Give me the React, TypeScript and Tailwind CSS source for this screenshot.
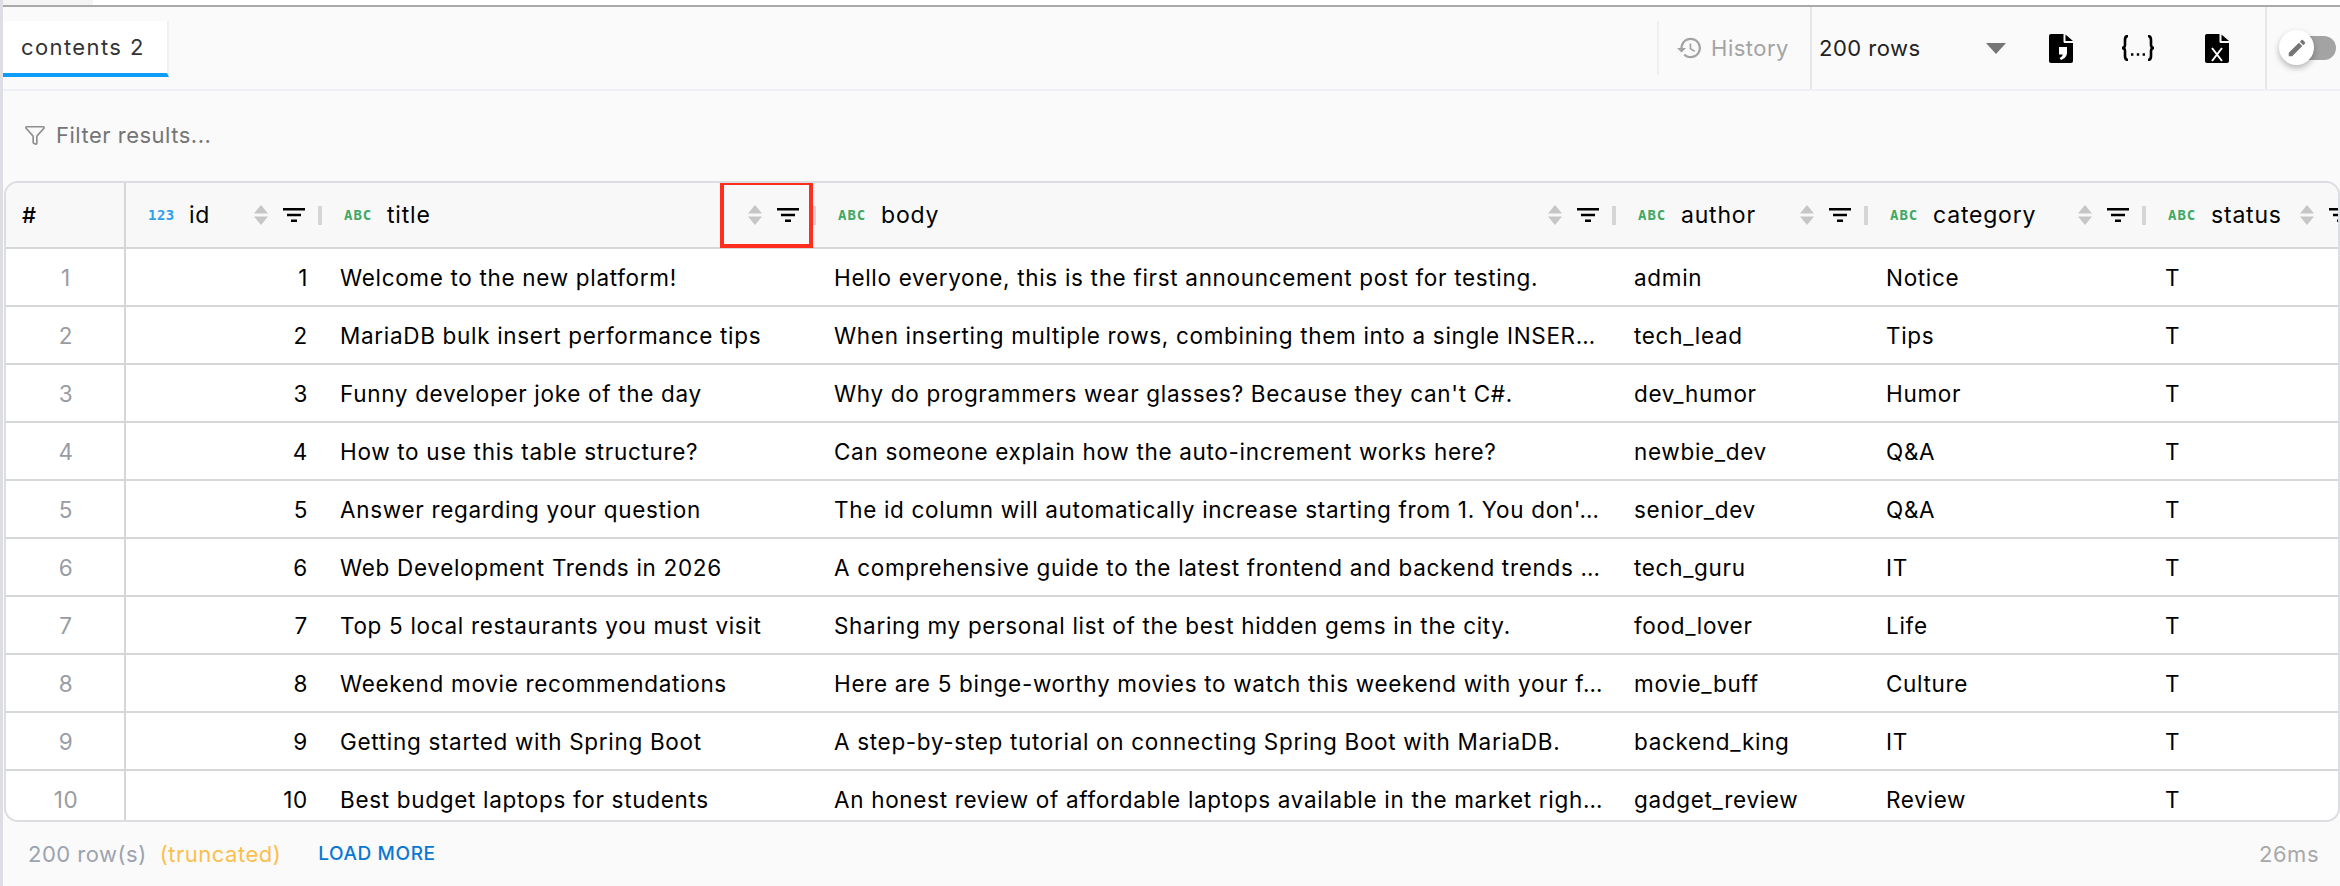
import { Funnel } from "lucide-react";

const rows = [
  ["Welcome to the new platform!", "Hello everyone, this is the first announcement post for testing.", "admin", "Notice"],
  ["MariaDB bulk insert performance tips", "When inserting multiple rows, combining them into a single INSER…", "tech_lead", "Tips"],
  ["Funny developer joke of the day", "Why do programmers wear glasses? Because they can't C#.", "dev_humor", "Humor"],
  ["How to use this table structure?", "Can someone explain how the auto-increment works here?", "newbie_dev", "Q&A"],
  ["Answer regarding your question", "The id column will automatically increase starting from 1. You don'…", "senior_dev", "Q&A"],
  ["Web Development Trends in 2026", "A comprehensive guide to the latest frontend and backend trends …", "tech_guru", "IT"],
  ["Top 5 local restaurants you must visit", "Sharing my personal list of the best hidden gems in the city.", "food_lover", "Life"],
  ["Weekend movie recommendations", "Here are 5 binge-worthy movies to watch this weekend with your f…", "movie_buff", "Culture"],
  ["Getting started with Spring Boot", "A step-by-step tutorial on connecting Spring Boot with MariaDB.", "backend_king", "IT"],
  ["Best budget laptops for students", "An honest review of affordable laptops available in the market righ…", "gadget_review", "Review"],
];

function SortIcon() {
  return (
    <svg width="14" height="20" viewBox="0 0 14 20" className="shrink-0 fill-[#c6c6c6]">
      <path d="M7 0l7 8.500H0zM7 20L0 11.500h14z" />
    </svg>
  );
}

function FilterIcon() {
  return (
    <svg width="22" height="14" viewBox="0 0 22 14" className="shrink-0 fill-black">
      <path d="M0 0h22v2.500H0zM4 5.700h14v2.500H4zM8 11.400h6V14H8z" />
    </svg>
  );
}

function ColHeader({ name, kind, width }: { name: string; kind: "abc" | "num"; width: string }) {
  return (
    <div className={`${width} flex items-center shrink-0 h-full`}>
      {kind === "num" ? (
        <span className="ml-[22px] w-[41px] font-['DejaVu_Sans_Mono'] font-bold text-[14px] text-[#2f9ff0]">123</span>
      ) : (
        <span className="ml-[22px] w-[43px] font-['DejaVu_Sans_Mono'] font-bold text-[14px] text-[#3fa865] tracking-[1px]">ABC</span>
      )}
      <span className="text-[23px] tracking-[0.800px] text-black">{name}</span>
      <div className="ml-auto flex items-center">
        <SortIcon />
        <div className="ml-[15px]">
          <FilterIcon />
        </div>
        <div className="ml-[13px] w-[4px] h-[19px] bg-[#d6d6d6]" />
      </div>
    </div>
  );
}

function FileIcon({ mark }: { mark: "comma" | "x" }) {
  return (
    <svg width="24" height="29" viewBox="0 0 24 29" className="shrink-0">
      <path d="M2 0h12.500v7.500c0 1 .5 1.500 1.500 1.500h8v18c0 1.200-.8 2-2 2H2c-1.200 0-2-.8-2-2V2C0 .8.800 0 2 0zM16.500.5L24 7h-7.500z" fill="#000" />
      {mark === "comma" ? (
        <path d="M10 13h8v5.500c0 3-1.500 6-6 7.500l-1.500-2c2-.8 3-2 3.200-3.500H10z" fill="#fff" />
      ) : (
        <path d="M7 14l10 13M17 14L7 27" stroke="#fff" strokeWidth="2" fill="none" />
      )}
    </svg>
  );
}

function JsonIcon() {
  return (
    <svg width="34" height="26" viewBox="0 0 34 26" className="shrink-0 fill-none stroke-black" strokeWidth="2.600">
      <path d="M7 1C4 1 4 3 4 5v5c0 2-1 3-3 3 2 0 3 1 3 3v5c0 2 0 4 3 4" />
      <path d="M27 1c3 0 3 2 3 4v5c0 2 1 3 3 3-2 0-3 1-3 3v5c0 2 0 4-3 4" />
      <path d="M10 19.500h2.400M15.800 19.500h2.400M21.600 19.500H24" strokeWidth="2.400" />
    </svg>
  );
}

export default function App() {
  return (
    <div className="w-[2340px] h-[886px] overflow-hidden bg-[#fafafa] flex flex-col font-['Inter',sans-serif] text-[22px] tracking-[0.500px] relative border-l-[3px] border-[#dcdee4]">
      <div className="h-[5px] bg-white shrink-0">
        <div className="w-[90px] h-full bg-[#f4f4f4]" />
      </div>
      <div className="h-[2px] bg-[#a9a9a9] shrink-0" />

      {/* toolbar */}
      <div className="h-[84px] shrink-0 border-b-2 border-[#eef0f6] flex">
        <div className="mt-[14px] h-[56px] w-[166px] bg-white border-r-2 border-[#eef0f6] border-b-4 border-b-[#0d9cf7] pl-[18px] flex items-center text-[#333] tracking-[1.400px]">
          contents 2
        </div>
        <div className="ml-auto flex h-full">
          <div className="my-[14px] border-l-2 border-[#eceef2] pl-[18px] pr-[21px] flex items-center gap-[10px] text-[#a3a3a3]">
            <svg width="24" height="24" viewBox="1 3 21 18" className="fill-[#a3a3a3]">
              <path d="M13 3c-4.970 0-9 4.030-9 9H1l3.890 3.890.07.14L9 12H6c0-3.870 3.130-7 7-7s7 3.130 7 7-3.130 7-7 7c-1.930 0-3.680-.79-4.940-2.060l-1.420 1.420C8.270 19.990 10.510 21 13 21c4.970 0 9-4.030 9-9s-4.030-9-9-9zm-1 5v5l4.280 2.540.72-1.210-3.500-2.080V8H12z" />
            </svg>
            History
          </div>
          <div className="w-[457px] border-x-2 border-[#e6e7ea] pl-[7px] flex items-center text-[#222]">
            <span className="w-[167px]">200 rows</span>
            <div className="w-0 h-0 border-x-[10px] border-x-transparent border-t-[11px] border-t-[#757575]" />
            <div className="ml-[43px]">
              <FileIcon mark="comma" />
            </div>
            <div className="ml-[48px]">
              <JsonIcon />
            </div>
            <div className="ml-[50px]">
              <FileIcon mark="x" />
            </div>
          </div>
          <div className="w-[73px] flex items-center relative">
            <div className="ml-[29px] w-[40px] h-[24px] rounded-r-full bg-[#a3a3a3]" />
            <div className="absolute left-[12px] top-[23px] w-[35px] h-[35px] rounded-full bg-white shadow-[0_3px_6px_rgba(0,0,0,0.28)] flex items-center justify-center">
              <svg width="22" height="22" viewBox="0 0 24 24" className="fill-[#757575]">
                <path d="M3 17.250V21h3.750L17.810 9.940l-3.750-3.750L3 17.250zM20.710 7.040c.39-.39.39-1.020 0-1.410l-2.340-2.340c-.39-.39-1.020-.39-1.410 0l-1.830 1.830 3.750 3.750 1.830-1.830z" />
              </svg>
            </div>
          </div>
        </div>
      </div>

      {/* filter */}
      <div className="h-[90px] shrink-0 flex items-center pl-[21px] pb-[2px] gap-[10px] text-[#757575]">
        <Funnel size={22} strokeWidth={1.800} className="text-[#8f8f8f]" />
        Filter results...
      </div>

      {/* table */}
      <div className="h-[641px] shrink-0 border-2 border-[#dcdde1] rounded-[14px] overflow-hidden bg-white ml-px">
        <div className="h-[66px] bg-[#f8f8f8] border-b-2 border-[#d5d6d8] flex relative">
          <div className="w-[120px] shrink-0 h-full border-r-2 border-[#d5d6d8] pl-[16px] flex items-center font-medium text-black">#</div>
          <ColHeader name="id" kind="num" width="w-[196px]" />
          <ColHeader name="title" kind="abc" width="w-[494px]" />
          <ColHeader name="body" kind="abc" width="w-[800px]" />
          <ColHeader name="author" kind="abc" width="w-[252px]" />
          <ColHeader name="category" kind="abc" width="w-[278px]" />
          <ColHeader name="status" kind="abc" width="w-[222px]" />
          <div className="absolute left-[714px] -top-[2px] w-[93px] h-[67px] border-4 border-[#ff2e1f]" />
        </div>
        {rows.map((r, i) => (
          <div key={i} className="h-[58px] border-b-2 border-[#d5d6d8] flex items-center text-[22.500px] tracking-[0.680px] text-black whitespace-nowrap">
            <div className="w-[120px] shrink-0 h-full border-r-2 border-[#d5d6d8] pl-[2px] pt-[1px] flex items-center justify-center text-[#999ca3]">{i + 1}</div>
            <div className="w-[196px] shrink-0 text-right pr-[14px] pt-[1px]">{i + 1}</div>
            <div className="w-[494px] shrink-0 pl-[18px] pt-[1px]">{r[0]}</div>
            <div className="w-[800px] shrink-0 pl-[18px] pt-[1px]">{r[1]}</div>
            <div className="w-[252px] shrink-0 pl-[18px] pt-[1px]">{r[2]}</div>
            <div className="w-[278px] shrink-0 pl-[18px] pt-[1px]">{r[3]}</div>
            <div className="pl-[19px] pt-[1px]">T</div>
          </div>
        ))}
      </div>

      {/* footer */}
      <div className="flex-1 flex items-center pl-[25px] pr-[21px] text-[#9ca3af]">
        <span>200 row(s)</span>
        <span className="ml-[13px] text-[#fbbf4d]">(truncated)</span>
        <span className="ml-[37px] text-[19px] font-medium text-[#0a78d2] tracking-[0.600px]">LOAD MORE</span>
        <span className="ml-auto text-[#a8a8a8]">26ms</span>
      </div>
    </div>
  );
}
